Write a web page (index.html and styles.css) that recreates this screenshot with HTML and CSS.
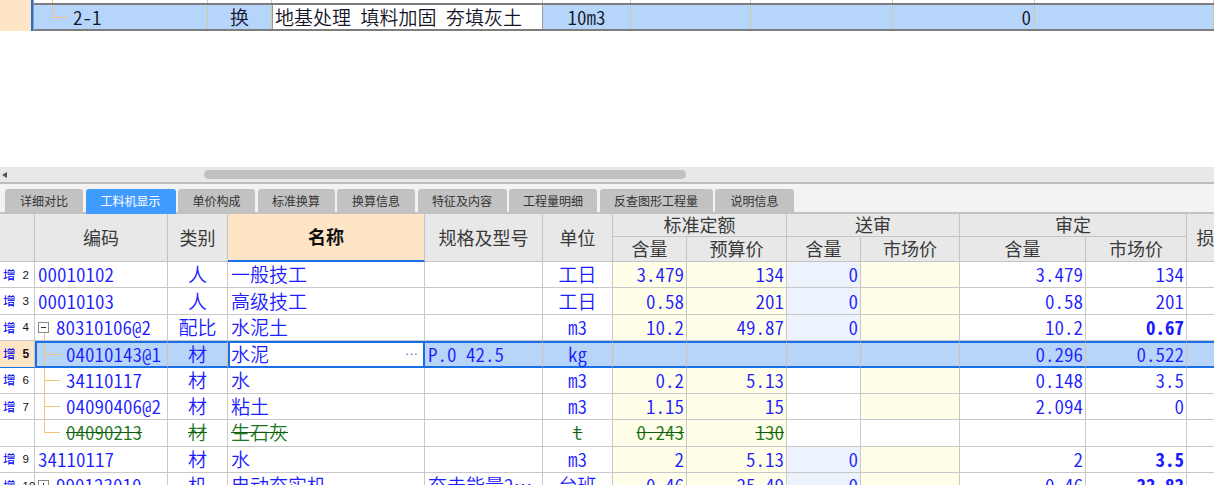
FILE: index.html
```html
<!DOCTYPE html>
<html lang="zh">
<head>
<meta charset="utf-8">
<title>工料机显示</title>
<link rel="stylesheet" href="styles.css">
</head>
<body>
<div class="top">
  <div class="top-hdr"></div>
  <div class="top-main">
    <div class="strip">
      <div class="s s1 strip-tree"></div><div class="s s2"></div><div class="s s3"></div><div class="s s4"></div><div class="s s5"></div><div class="s s6"></div><div class="s s7"></div><div class="s s8"></div>
    </div>
    <div class="trow">
      <div class="t s1"><span class="br br-top"></span>2-1</div>
      <div class="t s2 ctr">换</div>
      <div class="t s3 edit">地基处理 填料加固 夯填灰土</div>
      <div class="t s4 ctr">10m3</div>
      <div class="t s5"></div>
      <div class="t s6"></div>
      <div class="t s7 rt">0</div>
      <div class="t s8"></div>
    </div>
  </div>
</div>

<div class="hscroll"><span class="arrow"></span><span class="thumb"></span></div>

<div class="tabs">
  <div class="tab w1">详细对比</div>
  <div class="tab w2 active">工料机显示</div>
  <div class="tab w3">单价构成</div>
  <div class="tab w4">标准换算</div>
  <div class="tab w5">换算信息</div>
  <div class="tab w6">特征及内容</div>
  <div class="tab w7">工程量明细</div>
  <div class="tab w8">反查图形工程量</div>
  <div class="tab w9">说明信息</div>
</div>

<div class="grid">
  <div class="head">
    <div class="h rs"></div>
    <div class="h rs">编码</div>
    <div class="h rs">类别</div>
    <div class="h rs name">名称</div>
    <div class="h rs">规格及型号</div>
    <div class="h rs">单位</div>
    <div class="h cs">标准定额</div>
    <div class="h cs">送审</div>
    <div class="h cs">审定</div>
    <div class="h rs">损耗率</div>
    <div class="h">含量</div>
    <div class="h">预算价</div>
    <div class="h">含量</div>
    <div class="h">市场价</div>
    <div class="h">含量</div>
    <div class="h">市场价</div>
  </div>

  <div class="row">
    <div class="rh"><span class="z">增</span><span class="no">2</span></div>
    <div class="c">00010102</div>
    <div class="c m">人</div>
    <div class="c">一般技工</div>
    <div class="c"></div>
    <div class="c m">工日</div>
    <div class="c r y">3.479</div>
    <div class="c r y">134</div>
    <div class="c r b">0</div>
    <div class="c y"></div>
    <div class="c r">3.479</div>
    <div class="c r">134</div>
    <div class="c"></div>
  </div>

  <div class="row">
    <div class="rh"><span class="z">增</span><span class="no">3</span></div>
    <div class="c">00010103</div>
    <div class="c m">人</div>
    <div class="c">高级技工</div>
    <div class="c"></div>
    <div class="c m">工日</div>
    <div class="c r y">0.58</div>
    <div class="c r y">201</div>
    <div class="c r b">0</div>
    <div class="c y"></div>
    <div class="c r">0.58</div>
    <div class="c r">201</div>
    <div class="c"></div>
  </div>

  <div class="row">
    <div class="rh"><span class="z">增</span><span class="no">4</span></div>
    <div class="c kids"><span class="ex"></span>80310106@2</div>
    <div class="c m">配比</div>
    <div class="c">水泥土</div>
    <div class="c"></div>
    <div class="c m">m3</div>
    <div class="c r y">10.2</div>
    <div class="c r y">49.87</div>
    <div class="c r b">0</div>
    <div class="c y"></div>
    <div class="c r">10.2</div>
    <div class="c r bold">0.67</div>
    <div class="c"></div>
  </div>

  <div class="row sel">
    <div class="rh cur"><span class="z">增</span><span class="no strong">5</span></div>
    <div class="c code tr"><span class="br"></span>04010143@1</div>
    <div class="c m">材</div>
    <div class="c edit"><span>水泥</span><span class="dots">…</span></div>
    <div class="c spec">P.0 42.5</div>
    <div class="c m">kg</div>
    <div class="c"></div>
    <div class="c"></div>
    <div class="c"></div>
    <div class="c"></div>
    <div class="c r">0.296</div>
    <div class="c r">0.522</div>
    <div class="c"></div>
  </div>

  <div class="row">
    <div class="rh"><span class="z">增</span><span class="no">6</span></div>
    <div class="c tr"><span class="br"></span>34110117</div>
    <div class="c m">材</div>
    <div class="c">水</div>
    <div class="c"></div>
    <div class="c m">m3</div>
    <div class="c r y">0.2</div>
    <div class="c r y">5.13</div>
    <div class="c"></div>
    <div class="c y"></div>
    <div class="c r">0.148</div>
    <div class="c r">3.5</div>
    <div class="c"></div>
  </div>

  <div class="row">
    <div class="rh"><span class="z">增</span><span class="no">7</span></div>
    <div class="c tr"><span class="br"></span>04090406@2</div>
    <div class="c m">材</div>
    <div class="c">粘土</div>
    <div class="c"></div>
    <div class="c m">m3</div>
    <div class="c r y">1.15</div>
    <div class="c r y">15</div>
    <div class="c"></div>
    <div class="c y"></div>
    <div class="c r">2.094</div>
    <div class="c r">0</div>
    <div class="c"></div>
  </div>

  <div class="row">
    <div class="rh"></div>
    <div class="c tr del"><span class="br last"></span>04090213</div>
    <div class="c m del">材</div>
    <div class="c del">生石灰</div>
    <div class="c"></div>
    <div class="c m del">t</div>
    <div class="c r y del">0.243</div>
    <div class="c r y del">130</div>
    <div class="c"></div>
    <div class="c"></div>
    <div class="c"></div>
    <div class="c"></div>
    <div class="c"></div>
  </div>

  <div class="row">
    <div class="rh"><span class="z">增</span><span class="no">9</span></div>
    <div class="c">34110117</div>
    <div class="c m">材</div>
    <div class="c">水</div>
    <div class="c"></div>
    <div class="c m">m3</div>
    <div class="c r y">2</div>
    <div class="c r y">5.13</div>
    <div class="c r b">0</div>
    <div class="c y"></div>
    <div class="c r">2</div>
    <div class="c r bold">3.5</div>
    <div class="c"></div>
  </div>

  <div class="row">
    <div class="rh"><span class="z">增</span><span class="no">10</span></div>
    <div class="c"><span class="ex plus"></span>990123010</div>
    <div class="c m">机</div>
    <div class="c">电动夯实机</div>
    <div class="c">夯击能量2…</div>
    <div class="c m">台班</div>
    <div class="c r y">0.46</div>
    <div class="c r y">25.49</div>
    <div class="c r b">0</div>
    <div class="c y"></div>
    <div class="c r">0.46</div>
    <div class="c r bold">33.83</div>
    <div class="c"></div>
  </div>
</div>
</body>
</html>
```

FILE: styles.css
```css
html, body {
  margin: 0;
  padding: 0;
  background: #ffffff;
  height: 485px;
  overflow: hidden;
}

body {
  font-family: "Noto Sans CJK SC", "Noto Sans", sans-serif;
}

/* ---------- top (upper grid, one selected row) ---------- */
.top {
  height: 167px;
  display: flex;
  align-items: flex-start;
}

.top-hdr {
  width: 31px;
  height: 31px;
  background: #fde5c6;
  border-right: 2px solid #1a6ee6;
  flex: none;
}

.top-main {
  flex: 1;
  display: flex;
  flex-direction: column;
  border-left: 1px solid #9c9c9c;
  height: 31px;
}

.strip {
  height: 3px;
  display: flex;
}

.s {
  box-sizing: border-box;
  border-right: 1px solid #c9c9c9;
  flex: none;
}

.s1 { width: 174px; }
.s2 { width: 64px; }
.s3 { width: 271px; }
.s4 { width: 88px; }
.s5 { width: 120px; }
.s6 { width: 142px; }
.s7 { width: 142px; }
.s8 { flex: 1; }

.strip-tree {
  background: linear-gradient(#f4c27c, #f4c27c) 18px 0 / 1px 100% no-repeat;
}

.trow {
  height: 28px;
  box-sizing: border-box;
  border-top: 2px solid #7d7d7d;
  border-bottom: 2px solid #7d7d7d;
  background: #b6d5fb;
  display: flex;
}

.t {
  box-sizing: border-box;
  border-right: 1px solid #d9c4a4;
  display: flex;
  align-items: center;
  white-space: nowrap;
  font-size: 19px;
  font-weight: 350;
  color: #141428;
  font-feature-settings: "hwid" 1;
  line-height: 1.1;
}

.t.ctr { justify-content: center; }
.t.rt { justify-content: flex-end; padding-right: 3px; }

.t.edit {
  background: #ffffff;
  border-left: 1px solid #9a9a9a;
  border-right: 1px solid #9a9a9a;
  padding-left: 2px;
}

.br {
  align-self: stretch;
  flex: none;
  width: 16px;
  margin-left: 9px;
  margin-right: 6px;
  background:
    linear-gradient(#f4c27c, #f4c27c) 0 0 / 1px 100% no-repeat,
    linear-gradient(#f4c27c, #f4c27c) 0 50% / 16px 1px no-repeat;
}

.br.last {
  background:
    linear-gradient(#f4c27c, #f4c27c) 0 0 / 1px 50% no-repeat,
    linear-gradient(#f4c27c, #f4c27c) 0 50% / 16px 1px no-repeat;
}

.br.br-top {
  margin-left: 18px;
  margin-right: 5px;
  background:
    linear-gradient(#f4c27c, #f4c27c) 0 0 / 1px 50% no-repeat,
    linear-gradient(#f4c27c, #f4c27c) 0 50% / 16px 1px no-repeat;
}

/* ---------- horizontal scrollbar ---------- */
.hscroll {
  height: 15px;
  background: #e8e8e8;
  border-bottom: 2px solid #bdbdbd;
  display: flex;
  align-items: center;
}

.arrow {
  width: 0;
  height: 0;
  margin-left: 2px;
  border-right: 5px solid #555555;
  border-top: 3.5px solid transparent;
  border-bottom: 3.5px solid transparent;
}

.thumb {
  margin-left: 197px;
  width: 482px;
  height: 9px;
  border-radius: 5px;
  background: #c1c1c1;
}

/* ---------- tabs ---------- */
.tabs {
  height: 30px;
  box-sizing: border-box;
  background: #f3f3f3;
  box-shadow: inset 0 -2px 0 #c3c3c3;
  display: flex;
  align-items: flex-end;
  padding-left: 5px;
  gap: 2.5px;
}

.tab {
  height: 25px;
  box-sizing: border-box;
  padding-bottom: 2px;
  background: #c2c2c2;
  border-radius: 3px 3px 0 0;
  font-size: 12px;
  color: #333333;
  display: flex;
  align-items: center;
  justify-content: center;
  flex: none;
}

.tab.active {
  background: #3f9bff;
  color: #ffffff;
}

.w1 { width: 78px; }
.w2 { width: 90px; }
.w3 { width: 77px; }
.w4 { width: 77px; }
.w5 { width: 78px; }
.w6 { width: 89px; }
.w7 { width: 88px; }
.w8 { width: 113px; }
.w9 { width: 79px; }

/* ---------- lower grid ---------- */
.grid {
  width: 1214px;
  overflow: hidden;
}

.head,
.row {
  display: grid;
  grid-template-columns: 35px 133px 60px 197px 118px 70px 74px 100px 74px 99px 126px 101px 74px;
  width: 1261px;
}

.head {
  grid-template-rows: 23px 25px;
  background: #e8e8e8;
}

.h {
  box-sizing: border-box;
  border-right: 1px solid #c4c4c4;
  border-bottom: 1px solid #c4c4c4;
  display: flex;
  align-items: center;
  justify-content: center;
  font-size: 18px;
  color: #3a3a3a;
  white-space: nowrap;
  line-height: 1.1;
}

.h.rs { grid-row: span 2; }
.h.cs { grid-column: span 2; }

.h.name {
  background: #fde5c6;
  border-bottom: 2px solid #1a6ee6;
  font-weight: 700;
  color: #111111;
}

.row {
  height: 26.375px;
}

.rh {
  box-sizing: border-box;
  border-right: 1px solid #c8c8c8;
  border-bottom: 1px solid #c8c8c8;
  display: flex;
  align-items: center;
  padding-left: 3px;
  background: #ffffff;
}

.rh .z {
  font-size: 12.5px;
  color: #0000ee;
  line-height: 1.1;
}

.rh .no {
  margin-left: 7px;
  font-family: "Liberation Sans", sans-serif;
  font-size: 11.5px;
  color: #111111;
}

.rh .no.strong {
  font-weight: 700;
  font-size: 12px;
}

.rh.cur {
  background: #fde5c6;
}

.c {
  box-sizing: border-box;
  border-right: 1px solid #c8c8c8;
  border-bottom: 1px solid #c8c8c8;
  display: flex;
  align-items: center;
  padding: 0 3px;
  white-space: nowrap;
  font-size: 19px;
  font-weight: 350;
  color: #1c1cff;
  font-feature-settings: "hwid" 1;
  line-height: 1.1;
  background: #ffffff;
}

.c.m { justify-content: center; }
.c.r { justify-content: flex-end; padding-right: 2px; }
.c.y { background: #fffee8; }
.c.b { background: #ecf3fd; }
.c.bold { font-weight: 700; }
.c.tr { padding-left: 0; }

.c.kids {
  background: #ffffff linear-gradient(#f4c27c, #f4c27c) 9px 100% / 1px 50% no-repeat;
}

.ex {
  width: 11px;
  height: 11px;
  box-sizing: border-box;
  border: 1px solid #8a8a8a;
  margin-right: 7px;
  flex: none;
  background: #ffffff linear-gradient(#333333, #333333) center / 5px 1px no-repeat;
}

.ex.plus {
  background:
    linear-gradient(#333333, #333333) center / 5px 1px no-repeat,
    linear-gradient(#333333, #333333) center / 1px 5px no-repeat,
    #ffffff;
}

.c.del {
  color: #1d781d;
  text-decoration: line-through;
  text-decoration-color: #0f5a0f;
}

/* selected row */
.sel .c {
  background: #b6d5f9;
  border-top: 2px solid #1a6ee6;
  border-bottom: 2px solid #1a6ee6;
  border-right-color: #d3c2a8;
}

.sel .c.code {
  border-left: 2px solid #1a6ee6;
}

.sel .c.code .br {
  margin-left: 7px;
}

.sel .c.edit {
  background: #ffffff;
  border-left: 2px solid #1a6ee6;
  border-right: 2px solid #1a6ee6;
  padding-left: 1px;
  justify-content: space-between;
}

.dots {
  font-size: 13px;
  font-feature-settings: normal;
  color: #4a78c0;
  padding-right: 2px;
}

.sel .rh {
  border-bottom-color: #1a6ee6;
}
```
